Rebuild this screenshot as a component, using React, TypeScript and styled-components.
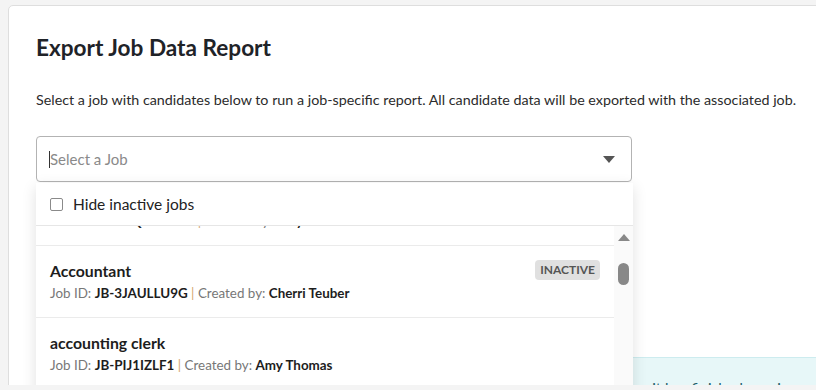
import React from 'react'
import styled, { createGlobalStyle } from 'styled-components'

type Job = {
  title: string
  id: string
  creator: string
  inactive?: boolean
}

const jobs: Job[] = [
  { title: 'Account Manager', id: 'JB-8KQ2MRTA4', creator: 'Amy Thomas' },
  { title: 'Accountant', id: 'JB-3JAULLU9G', creator: 'Cherri Teuber', inactive: true },
  { title: 'accounting clerk', id: 'JB-PIJ1IZLF1', creator: 'Amy Thomas' },
  { title: 'Administrative Assistant', id: 'JB-7TR0QW2XP', creator: 'Cherri Teuber' },
  { title: 'Bookkeeper', id: 'JB-C4N8ZK1LW', creator: 'Amy Thomas' },
  { title: 'Customer Service Rep', id: 'JB-Q9XH3EV7D', creator: 'Cherri Teuber' },
]

const GlobalStyle = createGlobalStyle`
  html, body {
    margin: 0;
    padding: 0;
    overflow: hidden;
    background: #f4f4f4;
    font-family: Lato, 'Open Sans', sans-serif;
    color: #222;
  }
`

const App: React.FC = () => {
  const listRef = React.useRef<HTMLDivElement>(null)

  // the list is opened part way down, as in the picture
  React.useLayoutEffect(() => {
    if (listRef.current) {
      listRef.current.scrollTop = 52
    }
  }, [])

  return (
    <Page>
      <GlobalStyle />
      <Card>
        <Title>Export Job Data Report</Title>
        <Intro>
          Select a job with candidates below to run a job-specific report. All candidate data will be
          exported with the associated job.
        </Intro>
        <SelectWrap>
          <SelectBox>
            <Caret />
            <Placeholder>Select a Job</Placeholder>
            <Arrow viewBox="0 0 12 7">
              <path d="M0 0h12L6 7z" />
            </Arrow>
          </SelectBox>
          <Dropdown>
            <FilterRow>
              <Check />
              <span>Hide inactive jobs</span>
            </FilterRow>
            <ListArea>
              <List ref={listRef}>
                {jobs.map((job) => (
                  <Row key={job.id}>
                    <RowHead>
                      <JobTitle>{job.title}</JobTitle>
                      {job.inactive && <Badge>INACTIVE</Badge>}
                    </RowHead>
                    <Meta>
                      Job ID: <b>{job.id}</b> <Pipe>|</Pipe> Created by: <b>{job.creator}</b>
                    </Meta>
                  </Row>
                ))}
              </List>
              <Scrollbar>
                <UpArrow viewBox="0 0 12 7">
                  <path d="M6 0l6 7H0z" />
                </UpArrow>
                <Thumb />
              </Scrollbar>
            </ListArea>
          </Dropdown>
        </SelectWrap>
        <Info>
          Your report is being generated in the background and it will be emailed to you directly
          once it has finished running. This may take a few minutes.
        </Info>
      </Card>
    </Page>
  )
}

export default App

const Page = styled.div`
  padding: 5px 0 0 8px;
  height: 385px;
  box-sizing: border-box;
`

const Card = styled.div`
  width: 860px;
  min-height: 420px;
  background: #fff;
  border: 1px solid #dedede;
  border-radius: 5px;
  padding: 28px 27px;
  box-sizing: border-box;
`

const Title = styled.h1`
  margin: 0;
  font-size: 22.6px;
  line-height: 28px;
  font-weight: 700;
  color: #1f2328;
`

const Intro = styled.p`
  margin: 28px 0 0;
  font-size: 14.3px;
  line-height: 20px;
  color: #2b2b2b;
`

const SelectWrap = styled.div`
  position: relative;
  width: 596px;
  margin-top: 26px;
`

const SelectBox = styled.div`
  display: flex;
  align-items: center;
  height: 46px;
  box-sizing: border-box;
  border: 1px solid #b3b3b3;
  border-radius: 4px;
  padding: 0 16px 0 12px;
`

const Caret = styled.span`
  width: 1px;
  height: 17px;
  background: #333;
`

const Placeholder = styled.span`
  flex: 1;
  font-size: 15px;
  color: #8a8a8a;
`

const Arrow = styled.svg`
  width: 12px;
  height: 7px;
  fill: #555;
`

const Dropdown = styled.div`
  position: absolute;
  top: 100%;
  left: 0;
  right: -1px;
  margin-top: 1px;
  background: #fff;
  box-shadow: 0 4px 14px rgba(0, 0, 0, 0.12);
  z-index: 2;
`

const FilterRow = styled.label`
  display: flex;
  align-items: center;
  gap: 10px;
  height: 42px;
  padding: 0 14px;
  border-bottom: 1px solid #e6e6e6;
  font-size: 15.5px;
  color: #222;
`

const Check = styled.span`
  width: 11px;
  height: 11px;
  border: 1px solid #8a8a8a;
  border-radius: 2px;
`

const ListArea = styled.div`
  display: flex;
  height: 250px;
`

const List = styled.div`
  flex: 1;
  overflow: hidden;
`

const Row = styled.div`
  height: 72px;
  box-sizing: border-box;
  padding: 14px 14px 0;
  border-bottom: 1px solid #ebebeb;
`

const RowHead = styled.div`
  display: flex;
  align-items: center;
  justify-content: space-between;
  height: 20px;
`

const JobTitle = styled.span`
  font-size: 15.8px;
  font-weight: 700;
  color: #1d1d1d;
`

const Badge = styled.span`
  display: inline-block;
  background: #e0e0e0;
  color: #555;
  border-radius: 4px;
  font-size: 12px;
  font-weight: 700;
  padding: 2px 5px;
  line-height: 16px;
`

const Meta = styled.div`
  margin-top: 4px;
  font-size: 13.4px;
  line-height: 18px;
  color: #777;
  b {
    color: #1d1d1d;
    font-weight: 700;
  }
`

const Pipe = styled.span`
  color: #d4a56a;
`

const Scrollbar = styled.div`
  display: flex;
  flex-direction: column;
  align-items: center;
  width: 19px;
  background: #fafafa;
  padding-top: 8px;
`

const UpArrow = styled.svg`
  width: 12px;
  height: 7px;
  fill: #888;
`

const Thumb = styled.div`
  width: 11px;
  height: 22px;
  border-radius: 6px;
  background: #888;
  margin-top: 22px;
`

const Info = styled.div`
  margin-top: 175px;
  background: #e7f7f8;
  border-top: 1px solid #cdecef;
  padding: 20px 16px;
  font-size: 15px;
  line-height: 20px;
  color: #1d5e6a;
`
